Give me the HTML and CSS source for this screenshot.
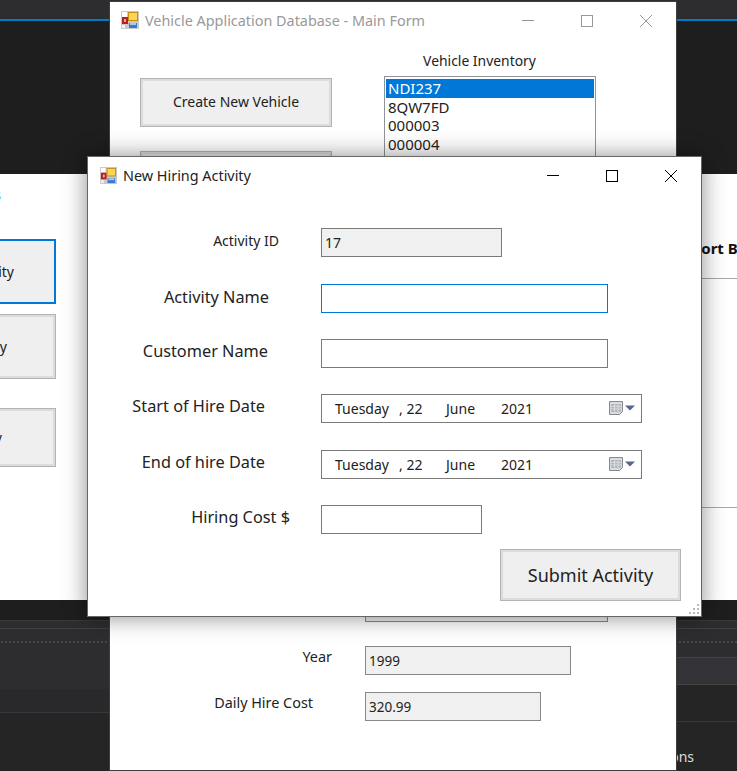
FILE: index.html
```html
<!DOCTYPE html>
<html lang="en">

<head>
  <meta charset="UTF-8">
  <meta name="viewport" content="width=device-width, initial-scale=1.0">
  <title>New Hiring Activity</title>
  <link rel="stylesheet" href="styles.css">
</head>

<body>
  <svg class="defs" width="0" height="0" aria-hidden="true">
    <symbol id="appIcon" viewBox="0 0 18 18">
      <rect width="18" height="18" fill="#c9c9c9" />
      <rect x="1" y="1" width="5" height="5" fill="#fff" />
      <rect x="1" y="6" width="6" height="7" fill="#b3221f" />
      <rect x="3" y="8" width="2" height="3" fill="#e9a8a0" />
      <rect x="1" y="14" width="3" height="3" fill="#f2f2f2" />
      <rect x="7" y="1" width="10" height="9" fill="#c98a10" />
      <rect x="8" y="2" width="8" height="7" fill="#fbd653" />
      <rect x="8" y="12" width="8" height="5" fill="#3f76d3" />
      <rect x="9" y="12" width="6" height="2" fill="#a9c7f2" />
    </symbol>
    <symbol id="calIcon" viewBox="0 0 26 14">
      <path d="M0.5 0.5h13v10l-3 3h-10z" fill="#d9dbdf" stroke="#85898f" />
      <path d="M2 3h10v8h-10z" fill="#b4b8be" />
      <path d="M2 5.500h10M2 8h10M5.500 3v8M9 3v8" stroke="#e4e6e9" stroke-width="0.7" />
      <path d="M16 4.500h10l-5 5z" fill="#55678a" />
    </symbol>
  </svg>

  <div class="desk">
    <div class="desk-col">
      <div class="top-bar"></div>
      <div class="dark-gap"></div>
      <div class="band"></div>
      <div class="band dotted"></div>
      <div class="band plain-tall"></div>
      <div class="band low last"></div>
    </div>
    <div class="desk-col">
      <div class="top-bar"></div>
      <div class="dark-gap"></div>
      <div class="band"></div>
      <div class="band dotted right"></div>
      <div class="band light"></div>
      <div class="band low right"></div>
      <div class="band low last right"><span class="desk-text">Actions</span></div>
    </div>
  </div>

  <!-- window behind everything: vehicle list -->
  <div class="window main-window">
    <div class="titlebar inactive">
      <svg class="app-icon"><use href="#appIcon" /></svg>
      <span class="title">Vehicle Application Database - Main Form</span>
      <div class="controls">
        <svg width="14" height="14" viewBox="0 0 14 14"><path d="M1 6.500h12" stroke="#999" /></svg>
        <svg width="14" height="14" viewBox="0 0 14 14"><rect x="1.500" y="1.500" width="11" height="11" fill="none" stroke="#999" /></svg>
        <svg width="14" height="14" viewBox="0 0 14 14"><path d="M1 1l12 12M13 1l-12 12" stroke="#999" /></svg>
      </div>
    </div>
    <div class="main-top">
      <div class="main-buttons">
        <button class="win-btn vehicle-btn">Create New Vehicle</button>
        <button class="win-btn vehicle-btn"></button>
      </div>
      <div class="inventory">
        <div class="inventory-label">Vehicle Inventory</div>
        <ul class="listbox">
          <li class="selected">NDI237</li>
          <li>8QW7FD</li>
          <li>000003</li>
          <li>000004</li>
        </ul>
      </div>
    </div>
    <div class="main-fields">
      <div class="main-row hidden-row">
        <label></label>
        <input class="field-model" type="text" value="" readonly>
      </div>
      <div class="main-row row-year">
        <label>Year</label>
        <input class="field-year" type="text" value="1999" readonly>
      </div>
      <div class="main-row">
        <label>Daily Hire Cost</label>
        <input class="field-cost" type="text" value="320.99" readonly>
      </div>
    </div>
  </div>

  <!-- second window, only its two edges show -->
  <div class="window hire-window">
    <div class="hire-side">
      <div class="hire-heading">Hiring Activities</div>
      <button class="win-btn side-btn focused">New Hiring Activity</button>
      <button class="win-btn side-btn second">Edit Activity</button>
      <button class="win-btn side-btn third">Delete Activity</button>
    </div>
    <div class="hire-main">
      <div class="sort-label">Sort By</div>
      <div class="hire-table"></div>
    </div>
  </div>

  <!-- front dialog -->
  <div class="window dialog">
    <div class="titlebar">
      <svg class="app-icon"><use href="#appIcon" /></svg>
      <span class="title">New Hiring Activity</span>
      <div class="controls">
        <svg width="14" height="14" viewBox="0 0 14 14"><path d="M1 6.500h12" stroke="#000" /></svg>
        <svg width="14" height="14" viewBox="0 0 14 14"><rect x="1.500" y="1.500" width="11" height="11" fill="none" stroke="#000" /></svg>
        <svg width="14" height="14" viewBox="0 0 14 14"><path d="M1 1l12 12M13 1l-12 12" stroke="#000" /></svg>
      </div>
    </div>

    <form class="hire-form">
      <div class="row row-id">
        <label for="activityId">Activity ID</label>
        <input id="activityId" class="short" type="text" value="17" readonly>
      </div>
      <div class="row row-name">
        <label for="activityName">Activity Name</label>
        <input id="activityName" class="wide focus" type="text">
      </div>
      <div class="row row-customer">
        <label for="customerName">Customer Name</label>
        <input id="customerName" class="wide" type="text">
      </div>
      <div class="row row-start">
        <label>Start of Hire Date</label>
        <div class="date-box">
          <span class="d-day">Tuesday</span><span class="d-num">, 22</span><span class="d-month">June</span><span class="d-year">2021</span>
          <svg class="cal" width="26" height="14"><use href="#calIcon" /></svg>
        </div>
      </div>
      <div class="row row-end">
        <label>End of hire Date</label>
        <div class="date-box">
          <span class="d-day">Tuesday</span><span class="d-num">, 22</span><span class="d-month">June</span><span class="d-year">2021</span>
          <svg class="cal" width="26" height="14"><use href="#calIcon" /></svg>
        </div>
      </div>
      <div class="row row-cost">
        <label for="hiringCost">Hiring Cost $</label>
        <input id="hiringCost" class="cost" type="text">
      </div>
      <div class="submit-row">
        <button type="button" class="win-btn submit">Submit Activity</button>
      </div>
    </form>

    <svg class="grip" width="11" height="11" viewBox="0 0 11 11">
      <path d="M8 0h2v2h-2zM8 4h2v2h-2zM4 4h2v2h-2zM8 8h2v2h-2zM4 8h2v2h-2zM0 8h2v2h-2z" fill="#b9b9b9" />
    </svg>
  </div>
</body>

</html>
```

FILE: styles.css
```css
* {
  box-sizing: border-box;
}

html,
body {
  height: 100%;
}

body {
  margin: 0;
  overflow: hidden;
  position: relative;
  font-family: 'Noto Sans', 'Open Sans', sans-serif;
  color: #222;
  background-color: #1e1e1e;
}

.defs {
  position: absolute;
}

/* dark editor behind the windows */
.desk {
  display: grid;
  grid-template-columns: 370px 1fr;
  height: 771px;
}

.desk-col {
  display: flex;
  flex-direction: column;
}

.top-bar {
  height: 21px;
  background-color: #2d2d30;
  border-bottom: 2px solid #007acc;
}

.dark-gap {
  height: 599px;
  background-color: #1e1e1e;
}

.band {
  height: 9px;
  background-color: #2d2d30;
  border-top: 1px solid #3a3a3d;
  border-bottom: 1px solid #3f3f42;
}

.band.dotted {
  height: 60px;
  border: none;
  background-color: #2d2d30;
  background-image: radial-gradient(#4a4a4d 0.7px, transparent 0.8px);
  background-size: 4px 4px;
  background-position: 0 11px;
  background-repeat: repeat-x;
}

.band.dotted.right {
  height: 29px;
  border-bottom: 1px solid #444;
}

.band.plain-tall {
  height: 24px;
  border: none;
  border-bottom: 1px solid #37373a;
  background-color: #29292b;
}

.band.light {
  height: 27px;
  border-top: none;
  border-bottom: 1px solid #444;
  background-color: #333337;
}

.band.low {
  height: 24px;
  border: none;
  background-color: #252526;
  border-bottom: 1px solid #37373a;
}

.band.low.right {
  height: 37px;
}

.band.last {
  flex: 1;
  border: none;
  position: relative;
}

.desk-text {
  position: absolute;
  right: 43px;
  top: 25px;
  font-size: 14px;
  color: #ddd;
}

/* windows */
.window {
  position: absolute;
  background-color: #fff;
  border: 1px solid #3f3f3f;
  overflow: hidden;
}

.main-window {
  left: 109px;
  top: 1px;
  width: 568px;
  height: 770px;
  display: flex;
  flex-direction: column;
}

.hire-window {
  left: -300px;
  top: 174px;
  width: 1137px;
  height: 426px;
  border: none;
  display: flex;
}

.dialog {
  left: 87px;
  top: 156px;
  width: 615px;
  height: 461px;
  border-color: #666;
  box-shadow: 0 0 22px rgba(0, 0, 0, 0.45);
}

.titlebar {
  display: flex;
  align-items: center;
  height: 38px;
  padding-left: 12px;
  font-size: 14.400px;
  flex-shrink: 0;
}

.titlebar.inactive {
  height: 36px;
  padding-left: 11px;
}

.titlebar.inactive .title {
  color: #999;
}

.app-icon {
  width: 18px;
  height: 18px;
  margin-right: 6px;
}

.dialog .app-icon {
  width: 17px;
  height: 17px;
  margin-bottom: 2px;
}

.dialog .title {
  padding-bottom: 1px;
}

.title {
  flex: 1;
  white-space: nowrap;
}

.controls {
  display: flex;
  gap: 45px;
  padding-right: 23px;
}

.titlebar.inactive .controls {
  padding-top: 2px;
}

.win-btn {
  font-family: inherit;
  color: #222;
  background-color: #efefef;
  border: 1px solid #b4b4b4;
  box-shadow: inset 0 0 0 2px #dcdcdc;
  padding: 0;
}

/* main window content */
.main-top {
  display: flex;
  padding-left: 30px;
}

.main-buttons {
  display: flex;
  flex-direction: column;
  gap: 24px;
  padding-top: 40px;
}

.vehicle-btn {
  width: 192px;
  height: 49px;
  font-size: 14px;
  padding-bottom: 3px;
}

.inventory {
  margin-left: 52px;
  width: 212px;
}

.inventory-label {
  text-align: center;
  font-size: 13.900px;
  line-height: 20px;
  margin: 13px 21px 5px 0;
}

.listbox {
  list-style: none;
  margin: 0;
  padding: 2px 1px;
  height: 100px;
  border: 1px solid #8f939c;
  font-size: 15px;
  line-height: 18.700px;
}

.listbox li {
  padding-left: 2px;
}

.listbox .selected {
  background-color: #0078d7;
  color: #fff;
}

.main-fields {
  margin-top: auto;
  padding-bottom: 49px;
  display: flex;
  flex-direction: column;
  gap: 17px;
}

.main-row {
  display: flex;
  align-items: center;
}

.main-row label {
  width: 203px;
  margin-right: 52px;
  text-align: right;
  font-size: 14.400px;
  padding-bottom: 9px;
}

.main-row.row-year label {
  width: 222px;
  margin-right: 33px;
  padding-bottom: 8px;
}

.main-row input {
  height: 29px;
  padding: 0 3px;
  font-family: inherit;
  font-size: 13.500px;
  color: #222;
  background-color: #f0f0f0;
  border: 1px solid #888;
  outline: none;
}

.hidden-row {
  margin-bottom: 7px;
}

.field-model {
  width: 243px;
}

.field-year {
  width: 206px;
}

.field-cost {
  width: 176px;
}

/* hire window edges */
.hire-side {
  width: 356px;
  display: flex;
  flex-direction: column;
  align-items: flex-end;
}

.hire-heading {
  margin: 11px 55px 0 0;
  font-size: 14px;
  line-height: 20px;
  color: #0078d7;
}

.side-btn {
  width: 200px;
  height: 65px;
  font-size: 14px;
  text-align: right;
  padding-right: 40px;
}

.side-btn.focused {
  margin-top: 34px;
  border: 2px solid #0078d7;
  box-shadow: none;
}

.side-btn.second {
  margin-top: 10px;
  padding-right: 48px;
}

.side-btn.third {
  margin-top: 29px;
  height: 59px;
  padding-right: 53px;
}

.hire-main {
  flex: 1;
}

.sort-label {
  margin: 64px 0 0 637px;
  font-size: 15px;
  line-height: 20px;
  font-weight: bold;
  color: #111;
}

.hire-table {
  margin: 20px 0 0 600px;
  height: 230px;
  border-top: 1px solid #a8a8a8;
  border-bottom: 1px solid #a8a8a8;
}

/* front dialog form */
.hire-form {
  display: flex;
  flex-direction: column;
  padding-top: 33px;
}

.row {
  display: flex;
  align-items: center;
  margin-bottom: 27px;
}

.row label {
  width: 233px;
  text-align: right;
  font-size: 16.300px;
  line-height: 20px;
  padding-bottom: 5px;
}

.row input {
  height: 29px;
  padding: 0 3px;
  font-family: inherit;
  font-size: 14px;
  color: #222;
  border: 1px solid #7a7a7a;
  outline: none;
  background-color: #fff;
}

.row-id label {
  font-size: 14px;
  padding-right: 42px;
  padding-bottom: 3px;
}

.row-name label {
  padding-right: 52px;
  padding-bottom: 3px;
}

.row-customer label {
  padding-right: 53px;
  padding-bottom: 5px;
}

.row-start label {
  padding-right: 56px;
  padding-bottom: 6px;
}

.row-end label {
  padding-right: 56px;
  padding-bottom: 5px;
}

.row-cost label {
  width: 202px;
  margin-right: 31px;
  padding-bottom: 5px;
}

.row-name {
  margin-bottom: 26px;
}

.row-customer {
  margin-bottom: 26px;
}

.row-end {
  margin-bottom: 26px;
}

.row input.short {
  width: 181px;
  background-color: #f0f0f0;
}

.row input.wide {
  width: 287px;
}

.row input.focus {
  border-color: #0078d7;
}

.row input.cost {
  width: 161px;
}

.date-box {
  display: flex;
  align-items: center;
  width: 321px;
  height: 29px;
  padding: 0 0 1px 13px;
  border: 1px solid #7a7a7a;
  font-size: 14px;
}

.d-day {
  width: 64px;
}

.d-num {
  width: 47px;
}

.d-month {
  width: 55px;
}

.d-year {
  width: 108px;
}

.cal {
  flex-shrink: 0;
}

.submit-row {
  display: flex;
  justify-content: flex-end;
  padding-right: 20px;
  margin-top: -12px;
}

.submit {
  width: 181px;
  height: 52px;
  font-size: 18px;
}

.grip {
  position: absolute;
  right: 1px;
  bottom: 1px;
}
```
